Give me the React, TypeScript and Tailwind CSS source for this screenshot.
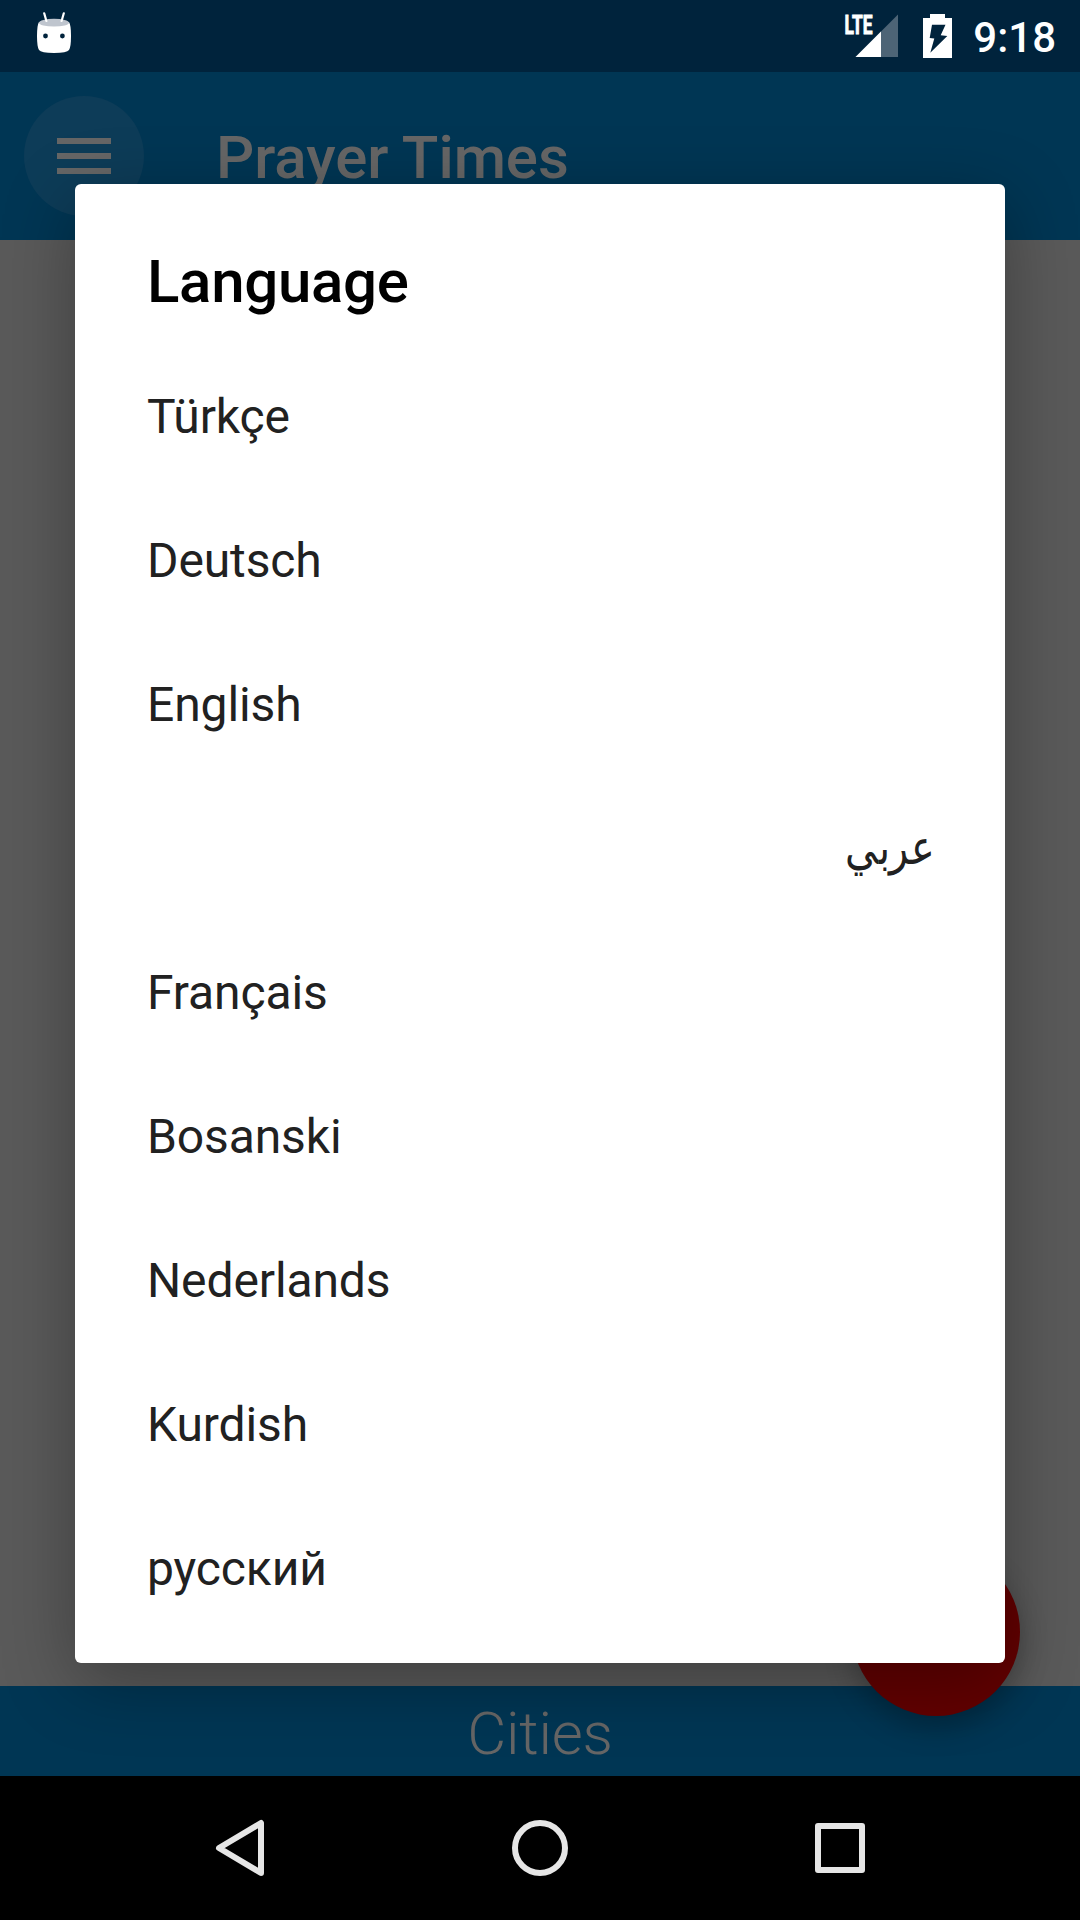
const languages = ["Türkçe", "Deutsch", "English", "عربي", "Français", "Bosanski", "Nederlands", "Kurdish", "русский"];

function StatusBar() {
  return (
    <header className="flex h-[72px] shrink-0 items-start bg-[#00233c] text-white">
      <svg className="ml-9 mt-3 h-[42px] w-9" viewBox="36 12 36 42" fill="none">
        <path d="M39 22Q37 25 37 36Q37 47 39 50Q41 53 54 53T69 50Q71 47 71 36Q71 25 69 22Z" fill="#fff" />
        <ellipse cx="54" cy="22.7" rx="15" ry="3.9" fill="#bfc5ce" />
        <path d="M44.2 13.3 46.4 21M63.8 13.3 61.6 21" stroke="#fff" strokeWidth="2.2" strokeLinecap="round" />
        <circle cx="45.5" cy="36" r="2.4" fill="#00233c" />
        <circle cx="62.4" cy="36" r="2.4" fill="#00233c" />
      </svg>
      <span className="grow" />
      <svg className="mt-1 h-14 w-[62px]" viewBox="838 4 62 56">
        <path d="M898 14.5V57H855.5Z" fill="#4d6476" />
        <path d="M881 31.5V57H855.5Z" fill="#fff" />
        <text x="844.5" y="33.5" textLength="28" lengthAdjust="spacingAndGlyphs" stroke="#fff" strokeWidth="0.9" className="fill-white text-[25px] font-bold">LTE</text>
      </svg>
      <svg className="ml-[23px] mt-[14px] h-11 w-[29px]" viewBox="0 0 29 44">
        <path d="M7 0h15v4h7v40H0V4h7Z" fill="#fff" />
        <path d="M9 10.7H22.5L17.7 21.3 24.3 22 7.3 38.8 11.3 24.6 6.7 24Z" fill="#00233c" />
      </svg>
      <span className="mr-[24px] mt-[6px] w-[104px] whitespace-nowrap text-right text-[42px] font-medium leading-[64px]">9:18</span>
    </header>
  );
}

function NavigationBar() {
  return (
    <nav className="flex h-36 shrink-0 items-center justify-center gap-60 bg-black">
      <svg className="size-[60px]" viewBox="0 0 60 60" fill="none" stroke="#e6e6e6" strokeWidth="6" strokeLinejoin="round">
        <path d="M51 5V55L9 30Z" />
      </svg>
      <svg className="size-[60px]" viewBox="0 0 60 60" fill="none" stroke="#e6e6e6" strokeWidth="6">
        <circle cx="30" cy="30" r="25" />
      </svg>
      <svg className="size-[60px]" viewBox="0 0 60 60" fill="none" stroke="#e6e6e6" strokeWidth="6" strokeLinejoin="round">
        <rect x="8" y="8" width="44" height="44" />
      </svg>
    </nav>
  );
}

export default function App() {
  return (
    <div className="relative flex h-[1920px] w-[1080px] flex-col overflow-hidden bg-[#5a5a5a] font-['Roboto','Noto_Sans',sans-serif]">
      <StatusBar />
      <div className="flex h-[168px] shrink-0 items-center bg-[#003654]">
        <div className="ml-6 flex size-[120px] items-center justify-center rounded-full bg-[#0d3c58]">
          <svg className="h-9 w-[54px]" viewBox="0 0 54 36"><path d="M0 0h54v6H0zM0 15h54v6H0zM0 30h54v6H0z" fill="#666" /></svg>
        </div>
        <h1 className="ml-[72px] pt-[4px] text-[60px] font-medium tracking-[-0.05px] text-[#666]">Prayer Times</h1>
      </div>
      <main className="grow" />
      <div className="flex h-[90px] shrink-0 items-center justify-center bg-[#003654] pt-[5px] text-[60px] font-light tracking-[-0.2px] text-[#666]">Cities</div>
      <div className="absolute left-[852px] top-[1548px] size-[168px] rounded-full bg-[#620000] shadow-[0_12px_28px_rgba(0,0,0,0.26)]" />
      <NavigationBar />
      <div className="absolute left-0 top-[72px] h-[1704px] w-full overflow-hidden">
        <section className="absolute left-[75px] top-[112px] h-[1479px] w-[930px] rounded-[6px] bg-white px-[72px] shadow-[0_18px_72px_rgba(0,0,0,0.32)]">
          <h2 className="pt-[54px] text-[60px] font-medium leading-[88px] tracking-[-0.3px] text-black">Language</h2>
          <ul className="pt-[19px]">
            {languages.map((name) =>
              name === "عربي" ? (
                <li key={name} dir="rtl" className="flex h-36 items-center text-[48px] text-[#212121]">
                  <span className="relative left-[2px] top-[-1px] origin-right scale-x-[0.83]">{name}</span>
                </li>
              ) : (
                <li key={name} className="flex h-36 items-center text-[48px] tracking-[-0.12px] text-[#212121]">{name}</li>
              ),
            )}
          </ul>
        </section>
      </div>
    </div>
  );
}
